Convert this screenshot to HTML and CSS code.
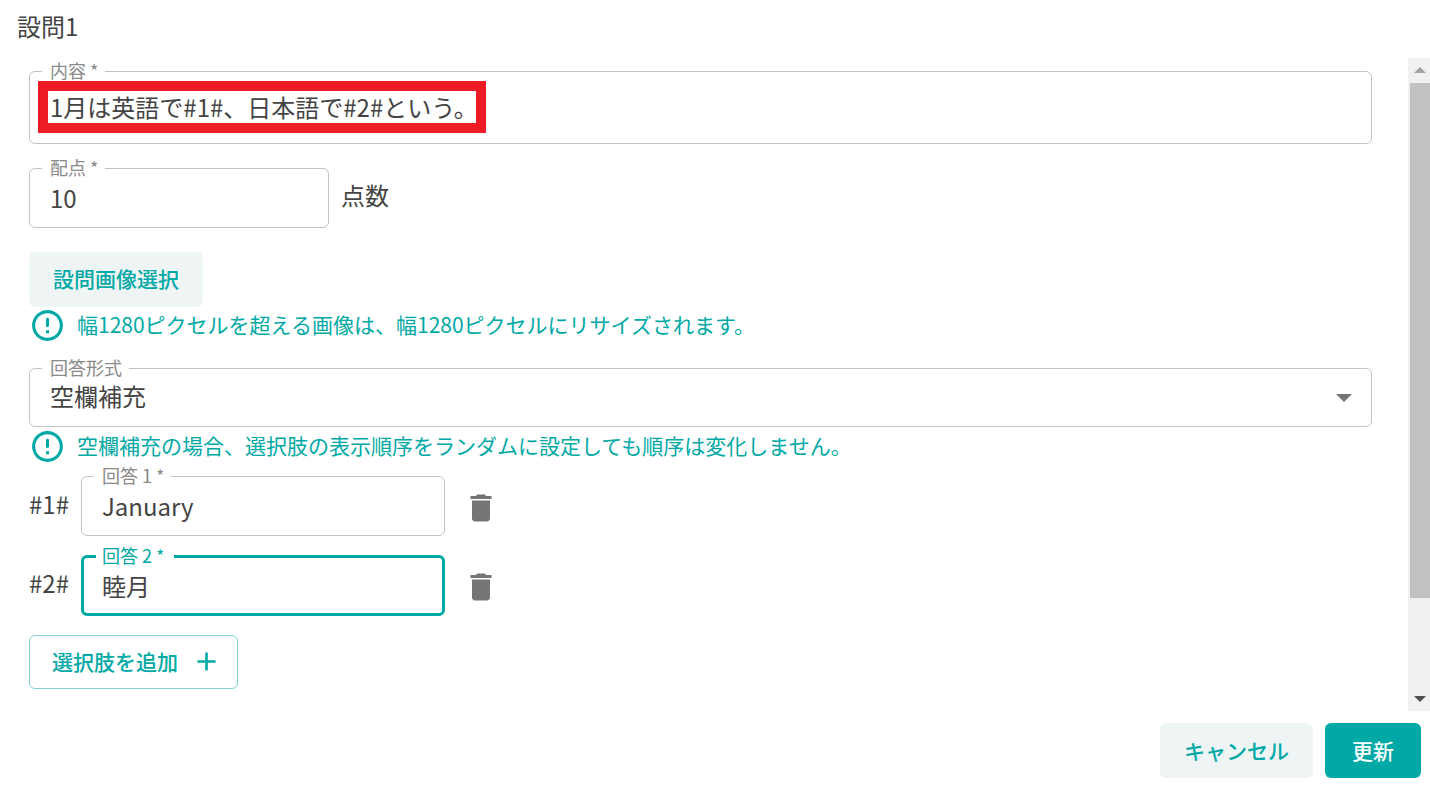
FILE: index.html
```html
<!DOCTYPE html>
<html lang="ja">
<head>
  <meta charset="UTF-8" />
  <title>設問1</title>
  <link rel="stylesheet" href="styles.css">
</head>
<body>
  <h1 class="dialog-title">設問1</h1>

  <div class="dialog-body">
    <form class="form">
      <!-- 内容 -->
      <fieldset class="field field-content">
        <legend>内容 *</legend>
        <div class="annotation"></div>
        <div class="field-value">1月は英語で#1#、日本語で#2#という。</div>
      </fieldset>

      <!-- 配点 -->
      <div class="score-row">
        <fieldset class="field field-score">
          <legend>配点 *</legend>
          <div class="field-value">10</div>
        </fieldset>
        <span class="score-unit">点数</span>
      </div>

      <button type="button" class="btn btn-soft btn-image">設問画像選択</button>
      <div class="hint">
        <svg class="hint-icon" viewBox="0 0 24 24"><path d="M12 7c.55 0 1 .45 1 1v4c0 .55-.45 1-1 1s-1-.45-1-1V8c0-.55.45-1 1-1zm-.01-5C6.47 2 2 6.48 2 12s4.47 10 9.99 10C17.52 22 22 17.52 22 12S17.52 2 11.99 2zM12 20c-4.42 0-8-3.58-8-8s3.58-8 8-8 8 3.58 8 8-3.58 8-8 8zm1-3h-2v-2h2v2z"/></svg>
        <span class="hint-text">幅1280ピクセルを超える画像は、幅1280ピクセルにリサイズされます。</span>
      </div>

      <!-- 回答形式 -->
      <fieldset class="field field-select">
        <legend>回答形式</legend>
        <div class="field-value">空欄補充</div>
        <span class="select-arrow"></span>
      </fieldset>
      <div class="hint hint-select">
        <svg class="hint-icon" viewBox="0 0 24 24"><path d="M12 7c.55 0 1 .45 1 1v4c0 .55-.45 1-1 1s-1-.45-1-1V8c0-.55.45-1 1-1zm-.01-5C6.47 2 2 6.48 2 12s4.47 10 9.99 10C17.52 22 22 17.52 22 12S17.52 2 11.99 2zM12 20c-4.42 0-8-3.58-8-8s3.58-8 8-8 8 3.58 8 8-3.58 8-8 8zm1-3h-2v-2h2v2z"/></svg>
        <span class="hint-text">空欄補充の場合、選択肢の表示順序をランダムに設定しても順序は変化しません。</span>
      </div>

      <!-- 回答 -->
      <div class="answer-row">
        <span class="answer-key">#1#</span>
        <fieldset class="field field-answer">
          <legend>回答 1 *</legend>
          <div class="field-value">January</div>
        </fieldset>
        <svg class="trash" viewBox="0 0 24 24"><path d="M6 19c0 1.1.9 2 2 2h8c1.1 0 2-.9 2-2V7H6v12zM19 4h-3.5l-1-1h-5l-1 1H5v2h14V4z"/></svg>
      </div>
      <div class="answer-row">
        <span class="answer-key">#2#</span>
        <fieldset class="field field-answer is-focused">
          <legend>回答 2 *</legend>
          <div class="field-value">睦月</div>
        </fieldset>
        <svg class="trash" viewBox="0 0 24 24"><path d="M6 19c0 1.1.9 2 2 2h8c1.1 0 2-.9 2-2V7H6v12zM19 4h-3.5l-1-1h-5l-1 1H5v2h14V4z"/></svg>
      </div>

      <button type="button" class="btn btn-outline">
        選択肢を追加
        <svg class="plus" viewBox="0 0 24 24"><path d="M19 13h-6v6h-2v-6H5v-2h6V5h2v6h6v2z"/></svg>
      </button>
    </form>

    <!-- Scrollbar -->
    <div class="scrollbar">
      <span class="scroll-up"></span>
      <div class="scroll-thumb"></div>
      <span class="scroll-down"></span>
    </div>
  </div>

  <div class="dialog-actions">
    <button type="button" class="btn btn-soft btn-cancel">キャンセル</button>
    <button type="button" class="btn btn-primary">更新</button>
  </div>
</body>
</html>
```

FILE: styles.css
```css
/* General Styles */
* {
  box-sizing: border-box;
}

body {
  margin: 0;
  width: 1430px;
  height: 788px;
  overflow: hidden;
  background-color: #ffffff;
  color: #444444;
  font-family: "Noto Sans CJK JP", "Noto Sans", sans-serif;
}

.dialog-title {
  margin: 0;
  height: 58px;
  padding: 9px 0 0 17px;
  font-size: 24px;
  font-weight: 400;
  line-height: 34px;
}

.dialog-body {
  display: flex;
  justify-content: space-between;
  height: 653px;
}

.form {
  width: 1372px;
  padding: 5px 0 0 29px;
  display: flex;
  flex-direction: column;
  align-items: flex-start;
}

/* Fields */
.field {
  position: relative;
  margin: 0;
  min-width: 0;
  padding: 0 20px;
  border: 1px solid #c4c4c4;
  border-radius: 6px;
}

.field legend {
  margin-left: -8px;
  padding: 0 7px 0 8px;
  height: 16px;
  font-size: 18px;
  line-height: 14px;
  color: #8a8a8a;
}

.field-value {
  position: relative;
  padding-top: 5px;
  font-size: 24px;
  line-height: 34px;
  white-space: nowrap;
}

.field-content {
  width: 100%;
  height: 81px;
}

.field-content .field-value {
  padding-top: 11px;
}

.field-select .field-value {
  padding-top: 3px;
}

/* Red box drawn over the screenshot */
.annotation {
  position: absolute;
  left: 8px;
  top: 2px;
  width: 448px;
  height: 52px;
  border: 10px solid #ed1c24;
  background-color: #ffffff;
}

.score-row {
  display: flex;
  align-items: center;
  gap: 12px;
  margin-top: 16px;
}

.field-score {
  width: 300px;
  height: 68px;
}

.score-unit {
  font-size: 24px;
}

.field-select {
  width: 100%;
  height: 67px;
  margin-top: 16px;
}

.select-arrow {
  position: absolute;
  right: 19px;
  top: 18px;
  border-left: 8px solid transparent;
  border-right: 8px solid transparent;
  border-top: 8px solid #757575;
}

/* Hints */
.hint {
  display: flex;
  align-items: center;
  gap: 11px;
  height: 37px;
  font-size: 21px;
  color: #00a9a5;
  white-space: nowrap;
}

.hint-text {
  padding-bottom: 4px;
}

.hint-icon {
  width: 37px;
  height: 37px;
  fill: #00a9a5;
  flex: none;
}

.hint-select {
  margin-top: 1px;
}

/* Answers */
.answer-row {
  display: flex;
  align-items: center;
  margin-top: 3px;
}

.answer-row + .answer-row {
  margin-top: 12px;
}

.answer-key {
  width: 52px;
  font-size: 24px;
  margin-top: 2px;
}

.answer-row + .answer-row .answer-key {
  margin-top: 0;
}

.field-answer {
  width: 364px;
  height: 68px;
}

.field-answer.is-focused {
  border: 3px solid #00a9a5;
  padding: 0 18px;
}

.is-focused legend {
  color: #00a9a5;
  margin-left: -6px;
  padding: 0 10px 0 6px;
}

.is-focused .field-value {
  padding-top: 5px;
}

.trash {
  width: 36px;
  height: 36px;
  margin: 12px 0 0 18px;
  fill: #757575;
}

.answer-row + .answer-row .trash {
  margin-top: 10px;
}

/* Button Styles */
.btn {
  display: inline-flex;
  align-items: center;
  justify-content: center;
  padding: 0 0 2px;
  font-family: inherit;
  font-size: 21px;
  font-weight: 500;
  border-radius: 6px;
  cursor: pointer;
}

.btn-soft {
  background-color: #eff5f5;
  color: #00a9a5;
  border: none;
}

.btn-image {
  width: 174px;
  height: 55px;
  margin-top: 24px;
  padding-bottom: 3px;
}

.btn-outline {
  justify-content: flex-start;
  width: 209px;
  height: 54px;
  margin-top: 19px;
  padding: 0 0 2px 22px;
  background-color: #ffffff;
  color: #00a9a5;
  border: 1px solid #7fd4d2;
}

.plus {
  width: 31px;
  height: 31px;
  margin-left: 13px;
  fill: #00a9a5;
}

.btn-primary {
  width: 96px;
  height: 55px;
  background-color: #00a9a5;
  color: #ffffff;
  border: none;
}

.btn-cancel {
  width: 153px;
  height: 55px;
}

.dialog-actions {
  display: flex;
  justify-content: flex-end;
  gap: 12px;
  padding: 12px 9px 0 0;
}

/* Scrollbar */
.scrollbar {
  position: relative;
  width: 22px;
  height: 100%;
  padding-left: 2px;
  background-color: #f1f1f1;
}

.scroll-thumb {
  margin-top: 25px;
  height: 515px;
  background-color: #c1c1c1;
}

.scroll-up,
.scroll-down {
  position: absolute;
  left: 6px;
  border-left: 6px solid transparent;
  border-right: 6px solid transparent;
}

.scroll-up {
  top: 9px;
  border-bottom: 6px solid #a3a3a3;
}

.scroll-down {
  bottom: 9px;
  border-top: 6px solid #505050;
}
```
